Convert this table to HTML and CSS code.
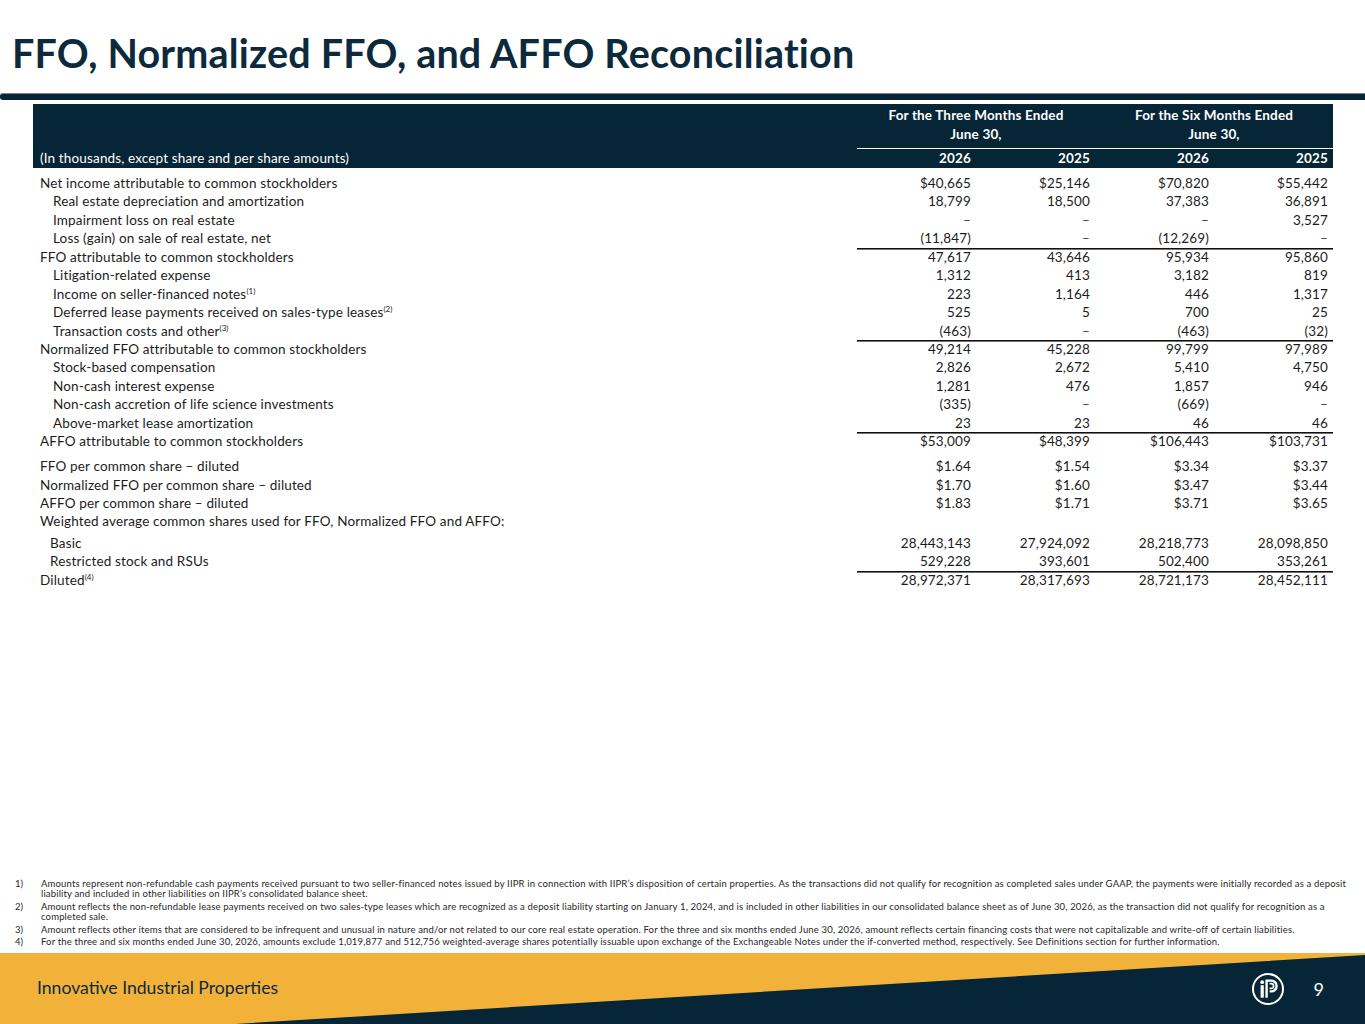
FILE: index.html
```html
<!DOCTYPE html>
<html lang="en">
<head>
<meta charset="utf-8">
<title>FFO, Normalized FFO, and AFFO Reconciliation</title>
<link rel="stylesheet" href="styles.css">
</head>
<body>
<div class="page">
  <h1 class="title">FFO, Normalized FFO, and AFFO Reconciliation</h1>
  <div class="title-rule"></div>

  <table class="recon">
    <colgroup>
      <col class="c-label"><col class="c-num"><col class="c-num"><col class="c-num"><col class="c-num">
    </colgroup>
    <thead>
      <tr class="h1row">
        <th></th>
        <th colspan="2" class="ctr">For the Three Months Ended</th>
        <th colspan="2" class="ctr">For the Six Months Ended</th>
      </tr>
      <tr class="h2row">
        <th></th>
        <th colspan="2" class="ctr under">June 30,</th>
        <th colspan="2" class="ctr under">June 30,</th>
      </tr>
      <tr class="h3row">
        <th class="units">(In thousands, except share and per share amounts)</th>
        <th class="num">2026</th><th class="num">2025</th><th class="num">2026</th><th class="num">2025</th>
      </tr>
    </thead>
    <tbody>
      <tr class="first"><td>Net income attributable to common stockholders</td><td class="num">$40,665</td><td class="num">$25,146</td><td class="num">$70,820</td><td class="num">$55,442</td></tr>
      <tr><td class="ind">Real estate depreciation and amortization</td><td class="num">18,799</td><td class="num">18,500</td><td class="num">37,383</td><td class="num">36,891</td></tr>
      <tr><td class="ind">Impairment loss on real estate</td><td class="num dash">–</td><td class="num dash">–</td><td class="num dash">–</td><td class="num">3,527</td></tr>
      <tr><td class="ind">Loss (gain) on sale of real estate, net</td><td class="num">(11,847)</td><td class="num dash">–</td><td class="num">(12,269)</td><td class="num dash">–</td></tr>
      <tr class="sum"><td>FFO attributable to common stockholders</td><td class="num">47,617</td><td class="num">43,646</td><td class="num">95,934</td><td class="num">95,860</td></tr>
      <tr><td class="ind">Litigation-related expense</td><td class="num">1,312</td><td class="num">413</td><td class="num">3,182</td><td class="num">819</td></tr>
      <tr><td class="ind">Income on seller-financed notes<sup>(1)</sup></td><td class="num">223</td><td class="num">1,164</td><td class="num">446</td><td class="num">1,317</td></tr>
      <tr><td class="ind">Deferred lease payments received on sales-type leases<sup>(2)</sup></td><td class="num">525</td><td class="num">5</td><td class="num">700</td><td class="num">25</td></tr>
      <tr><td class="ind">Transaction costs and other<sup>(3)</sup></td><td class="num">(463)</td><td class="num dash">–</td><td class="num">(463)</td><td class="num">(32)</td></tr>
      <tr class="sum"><td>Normalized FFO attributable to common stockholders</td><td class="num">49,214</td><td class="num">45,228</td><td class="num">99,799</td><td class="num">97,989</td></tr>
      <tr><td class="ind">Stock-based compensation</td><td class="num">2,826</td><td class="num">2,672</td><td class="num">5,410</td><td class="num">4,750</td></tr>
      <tr><td class="ind">Non-cash interest expense</td><td class="num">1,281</td><td class="num">476</td><td class="num">1,857</td><td class="num">946</td></tr>
      <tr><td class="ind">Non-cash accretion of life science investments</td><td class="num">(335)</td><td class="num dash">–</td><td class="num">(669)</td><td class="num dash">–</td></tr>
      <tr><td class="ind">Above-market lease amortization</td><td class="num">23</td><td class="num">23</td><td class="num">46</td><td class="num">46</td></tr>
      <tr class="sum"><td>AFFO attributable to common stockholders</td><td class="num">$53,009</td><td class="num">$48,399</td><td class="num">$106,443</td><td class="num">$103,731</td></tr>
      <tr class="gap-lg"><td>FFO per common share – diluted</td><td class="num">$1.64</td><td class="num">$1.54</td><td class="num">$3.34</td><td class="num">$3.37</td></tr>
      <tr><td>Normalized FFO per common share – diluted</td><td class="num">$1.70</td><td class="num">$1.60</td><td class="num">$3.47</td><td class="num">$3.44</td></tr>
      <tr><td>AFFO per common share – diluted</td><td class="num">$1.83</td><td class="num">$1.71</td><td class="num">$3.71</td><td class="num">$3.65</td></tr>
      <tr><td colspan="5">Weighted average common shares used for FFO, Normalized FFO and AFFO:</td></tr>
      <tr class="gap-sm"><td class="ind2">Basic</td><td class="num">28,443,143</td><td class="num">27,924,092</td><td class="num">28,218,773</td><td class="num">28,098,850</td></tr>
      <tr><td class="ind2">Restricted stock and RSUs</td><td class="num">529,228</td><td class="num">393,601</td><td class="num">502,400</td><td class="num">353,261</td></tr>
      <tr class="sum"><td>Diluted<sup>(4)</sup></td><td class="num">28,972,371</td><td class="num">28,317,693</td><td class="num">28,721,173</td><td class="num">28,452,111</td></tr>
    </tbody>
  </table>

  <div class="spacer"></div>

  <ol class="notes">
    <li><span class="n">1)</span><span class="t">Amounts represent non-refundable cash payments received pursuant to two seller-financed notes issued by IIPR in connection with IIPR’s disposition of certain properties. As the transactions did not qualify for recognition as completed sales under GAAP, the payments were initially recorded as a deposit<br>liability and included in other liabilities on IIPR’s consolidated balance sheet.</span></li>
    <li><span class="n">2)</span><span class="t">Amount reflects the non-refundable lease payments received on two sales-type leases which are recognized as a deposit liability starting on January 1, 2024, and is included in other liabilities in our consolidated balance sheet as of June 30, 2026, as the transaction did not qualify for recognition as a<br>completed sale.</span></li>
    <li><span class="n">3)</span><span class="t">Amount reflects other items that are considered to be infrequent and unusual in nature and/or not related to our core real estate operation. For the three and six months ended June 30, 2026, amount reflects certain financing costs that were not capitalizable and write-off of certain liabilities.</span></li>
    <li><span class="n">4)</span><span class="t">For the three and six months ended June 30, 2026, amounts exclude 1,019,877 and 512,756 weighted-average shares potentially issuable upon exchange of the Exchangeable Notes under the if-converted method, respectively. See Definitions section for further information.</span></li>
  </ol>

  <footer class="footer">
    <svg class="footer-wedge" viewBox="0 0 1365 71" preserveAspectRatio="none" aria-hidden="true">
      <polygon points="235,71 1365,2 1365,71" fill="#062536"/>
    </svg>
    <span class="brand">Innovative Industrial Properties</span>
    <span class="footer-right">
      <svg class="logo" viewBox="0 0 34 34" aria-hidden="true">
        <circle cx="17" cy="17" r="15" fill="none" stroke="#fff" stroke-width="2"/>
        <circle cx="11.2" cy="10.2" r="1.9" fill="#fff"/>
        <rect x="9.6" y="13.2" width="3.2" height="12.5" fill="#fff"/>
        <path d="M15.6 25.7 V8.6 H20.2 A5.4 5.4 0 0 1 20.2 19.4 H18.6" fill="none" stroke="#fff" stroke-width="2.4"/>
        <path d="M18.6 11.6 H20.2 A2.4 2.4 0 0 1 20.2 16.4 H18.6" fill="none" stroke="#fff" stroke-width="1.6"/>
      </svg>
      <span class="page-no">9</span>
    </span>
  </footer>
</div>
</body>
</html>
```

FILE: styles.css
```css
* { box-sizing: border-box; }

html, body {
  margin: 0;
  padding: 0;
  background: #ffffff;
}

body {
  font-family: Lato, "Liberation Sans", sans-serif;
  color: #1c1c1c;
}

.page {
  width: 1365px;
  height: 1024px;
  display: flex;
  flex-direction: column;
  overflow: hidden;
}

.title {
  margin: 0;
  padding: 31px 0 0 12px;
  font-size: 39.5px;
  line-height: 44px;
  font-weight: 700;
  color: #0c2a3c;
  letter-spacing: 0.2px;
}

.title-rule {
  margin-top: 18px;
  height: 7px;
  background: #062536;
  border-top: 1px solid #6f8796;
  border-radius: 3px 0 0 3px;
}

.recon {
  margin: 4px 32px 0 33px;
  width: 1300px;
  border-collapse: collapse;
  table-layout: fixed;
  font-size: 13.5px;
  letter-spacing: 0.15px;
}

.c-label { width: 824px; }
.c-num { width: 119px; }

.recon th, .recon td {
  padding: 0;
  white-space: nowrap;
}

.recon thead tr { background: #062536; color: #ffffff; }
.recon thead th { font-weight: 700; }

.h1row th { height: 20px; line-height: 20px; padding-top: 1px; }
.h2row th { height: 23px; line-height: 18px; padding-bottom: 4px; }
.h2row th.under { border-bottom: 1px solid #ffffff; }
.h3row th { height: 20px; line-height: 19px; }
.ctr { text-align: center; }
.recon th.units {
  text-align: left;
  font-weight: 400;
  padding-left: 7px;
}

.recon td {
  height: 18.43px;
  line-height: 18.43px;
  padding-left: 7px;
}
.recon td.ind { padding-left: 20px; }
.recon td.ind2 { padding-left: 17px; }

.recon .num {
  text-align: right;
  padding-left: 0;
  padding-right: 5px;
}
.recon td.num { padding-left: 0; }
.recon td.dash { color: #444; }

.recon tbody tr.first td { padding-top: 6px; height: 24.43px; }
.recon tbody tr.gap-lg td { padding-top: 6.6px; height: 25px; }
.recon tbody tr.gap-sm td { padding-top: 3px; height: 21.4px; }

.recon tr.sum td.num {
  background: linear-gradient(#111, #111) top left / 100% 1.6px no-repeat;
}

.recon sup {
  font-size: 8px;
  line-height: 0;
  vertical-align: 5px;
  letter-spacing: 0;
}

.spacer { flex: 1; }

.notes {
  list-style: none;
  margin: 0 0 3px 0;
  padding: 0 12px 0 15px;
  font-size: 9.5px;
  letter-spacing: 0.16px;
  line-height: 10.3px;
  color: #262626;
}
.notes li {
  display: flex;
  margin-bottom: 2.4px;
}
.notes .n { flex: 0 0 26px; letter-spacing: 0; }
.notes .t { flex: 1; }

.footer {
  position: relative;
  height: 71px;
  flex: 0 0 71px;
  background: #f2b23a;
  display: flex;
  align-items: center;
  justify-content: space-between;
  padding: 0 37px 3px 37px;
}

.footer-wedge {
  position: absolute;
  left: 0;
  top: 0;
  width: 100%;
  height: 100%;
}

.brand {
  position: relative;
  font-size: 17.6px;
  color: #0c2a3c;
  font-weight: 400;
}

.footer-right {
  position: relative;
  display: flex;
  align-items: center;
  gap: 29px;
  margin-top: 4px;
}

.logo { width: 34px; height: 34px; display: block; }

.page-no {
  color: #ffffff;
  font-size: 18px;
  line-height: 20px;
  margin-right: 4px;
}
```
